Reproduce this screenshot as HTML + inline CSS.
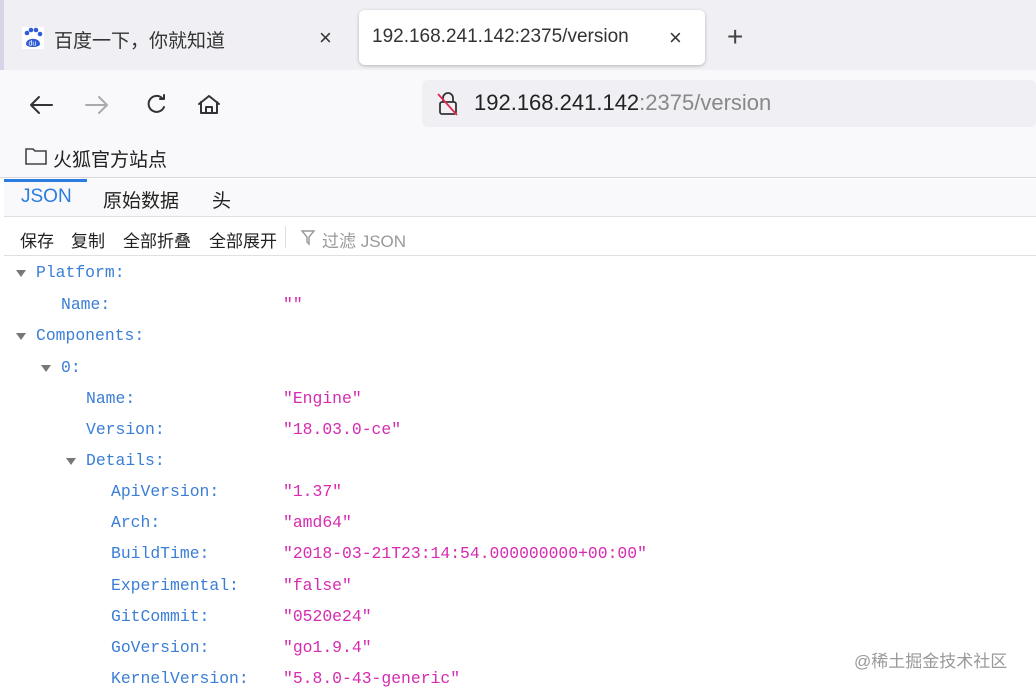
<!DOCTYPE html>
<html><head><meta charset="utf-8"><style>
*{margin:0;padding:0;box-sizing:border-box}
body{width:1036px;height:688px;overflow:hidden;background:#fff;font-family:"Liberation Sans","Noto Sans CJK SC",sans-serif;position:relative}
.abs{position:absolute}
.tabbar{left:0;top:0;width:1036px;height:70px;background:#f0f0f4}
.nav{left:0;top:70px;width:1036px;height:108px;background:#f9f9fb;border-bottom:1px solid #d8d8dc}
.row{position:absolute;font-family:"Liberation Mono",monospace;font-size:16.4px;line-height:20px;white-space:pre}
.k{color:#3a7ed6}
.v{color:#d62bb0}
.tri{position:absolute;width:0;height:0;border-left:5px solid transparent;border-right:5px solid transparent;border-top:7px solid #777}
.tb{position:absolute;top:227px;font-size:17px;color:#222}
</style></head><body>
<div class="abs tabbar"></div>
<div class="abs" style="left:0;top:0;width:4px;height:70px;background:#d8d4e8"></div>
<!-- tab 1 -->
<svg class="abs" style="left:22px;top:27px" width="22" height="22" viewBox="0 0 22 22"><rect width="22" height="22" fill="#fff"/><circle cx="5" cy="6" r="2.3" fill="#2f5bd6"/><circle cx="9" cy="3" r="2.3" fill="#2f5bd6"/><circle cx="14" cy="3" r="2.3" fill="#2f5bd6"/><circle cx="18" cy="7" r="2.3" fill="#2f5bd6"/><path d="M4 17 C4 10 18 10 18 17 C18 21 4 21 4 17Z" fill="#2f5bd6"/><text x="6.5" y="18.5" font-size="7" fill="#fff" font-family="Liberation Sans">du</text></svg>
<div class="abs" style="left:54px;top:26px;font-size:19px;color:#333">百度一下，你就知道</div>
<div class="abs" style="left:319px;top:25px;font-size:22px;color:#333">×</div>
<div class="abs" style="left:359px;top:10px;width:346px;height:55px;background:#fff;border-radius:6px;box-shadow:0 1px 3px rgba(0,0,0,.25)"></div>
<div class="abs" style="left:372px;top:26px;font-size:19px;color:#333">192.168.241.142:2375/version</div>
<div class="abs" style="left:669px;top:25px;font-size:22px;color:#333">×</div>
<div class="abs" style="left:727px;top:21px;font-size:28px;color:#444;font-weight:300">+</div>
<div class="abs nav"></div>
<!-- nav icons -->
<svg class="abs" style="left:28px;top:92px" width="200" height="26" viewBox="0 0 200 26" fill="none" stroke="#333" stroke-width="2" stroke-linecap="round" stroke-linejoin="round">
<path d="M3 13H24M3 13L11 5M3 13L11 21"/>
<path d="M58 13H79M79 13L71 5M79 13L71 21" stroke="#aaa"/>
<path d="M134 6A8 8 0 1 0 136 15"/><path d="M132 5H136V1" transform="translate(0,2)"/>
<path d="M171 12L181 4L191 12M173 10V21H189V10M178 21V15H184V21"/>
</svg>
<div class="abs" style="left:422px;top:80px;width:614px;height:47px;background:#f0f0f4;border-radius:6px"></div>
<svg class="abs" style="left:436px;top:91px" width="24" height="26" viewBox="0 0 24 26" fill="none" stroke="#333" stroke-width="1.8"><path d="M7 11V7A5 5 0 0 1 17 7V11"/><rect x="4" y="11" width="16" height="12" rx="2"/><path d="M2 3L21 24" stroke="#e22850"/></svg>
<div class="abs" style="left:474px;top:90px;font-size:22px;color:#222">192.168.241.142<span style="color:#888">:2375/version</span></div>
<svg class="abs" style="left:24px;top:146px" width="24" height="20" viewBox="0 0 24 20" fill="none" stroke="#444" stroke-width="1.6"><path d="M2 3H9L11 5H22V18H2Z"/></svg>
<div class="abs" style="left:53px;top:145px;font-size:19px;color:#222">火狐官方站点</div>
<!-- json tabs -->
<div class="abs" style="left:4px;top:179px;width:1032px;height:38px;background:#f9f9fb;border-bottom:1px solid #e0e0e2"></div>
<div class="abs" style="left:4px;top:179px;width:83px;height:3px;background:#2a7ce0"></div>
<div class="abs" style="left:21px;top:186px;font-size:19px;color:#2a7ce0">JSON</div>
<div class="abs" style="left:103px;top:186px;font-size:19px;color:#222">原始数据</div>
<div class="abs" style="left:212px;top:186px;font-size:19px;color:#222">头</div>
<div class="abs" style="left:4px;top:218px;width:1032px;height:38px;background:#fff;border-bottom:1px solid #e0e0e2"></div>
<div class="tb" style="left:20px">保存</div>
<div class="tb" style="left:71px">复制</div>
<div class="tb" style="left:123px">全部折叠</div>
<div class="tb" style="left:209px">全部展开</div>
<div class="abs" style="left:285px;top:226px;width:1px;height:22px;background:#ddd"></div>
<svg class="abs" style="left:300px;top:229px" width="16" height="17" viewBox="0 0 16 17" fill="none" stroke="#999" stroke-width="1.4"><path d="M2 2H14L9 8V15L7 13V8Z"/></svg>
<div class="tb" style="left:322px;color:#999">过滤 JSON</div>
<!-- tree -->
<div class="tri" style="left:16px;top:270px"></div>
<div class="row k" style="left:36px;top:263px">Platform:</div>
<div class="row k" style="left:61px;top:295px">Name:</div><div class="row v" style="left:283px;top:295px">""</div>
<div class="tri" style="left:16px;top:333px"></div>
<div class="row k" style="left:36px;top:326px">Components:</div>
<div class="tri" style="left:41px;top:365px"></div>
<div class="row k" style="left:61px;top:358px">0:</div>
<div class="row k" style="left:86px;top:389px">Name:</div><div class="row v" style="left:283px;top:389px">"Engine"</div>
<div class="row k" style="left:86px;top:420px">Version:</div><div class="row v" style="left:283px;top:420px">"18.03.0-ce"</div>
<div class="tri" style="left:66px;top:458px"></div>
<div class="row k" style="left:86px;top:451px">Details:</div>
<div class="row k" style="left:111px;top:482px">ApiVersion:</div><div class="row v" style="left:283px;top:482px">"1.37"</div>
<div class="row k" style="left:111px;top:513px">Arch:</div><div class="row v" style="left:283px;top:513px">"amd64"</div>
<div class="row k" style="left:111px;top:544px">BuildTime:</div><div class="row v" style="left:283px;top:544px">"2018-03-21T23:14:54.000000000+00:00"</div>
<div class="row k" style="left:111px;top:576px">Experimental:</div><div class="row v" style="left:283px;top:576px">"false"</div>
<div class="row k" style="left:111px;top:607px">GitCommit:</div><div class="row v" style="left:283px;top:607px">"0520e24"</div>
<div class="row k" style="left:111px;top:638px">GoVersion:</div><div class="row v" style="left:283px;top:638px">"go1.9.4"</div>
<div class="row k" style="left:111px;top:669px">KernelVersion:</div><div class="row v" style="left:283px;top:669px">"5.8.0-43-generic"</div>
<div class="abs" style="left:854px;top:647px;font-size:17px;color:#9a9a9a">@稀土掘金技术社区</div>
</body></html>
